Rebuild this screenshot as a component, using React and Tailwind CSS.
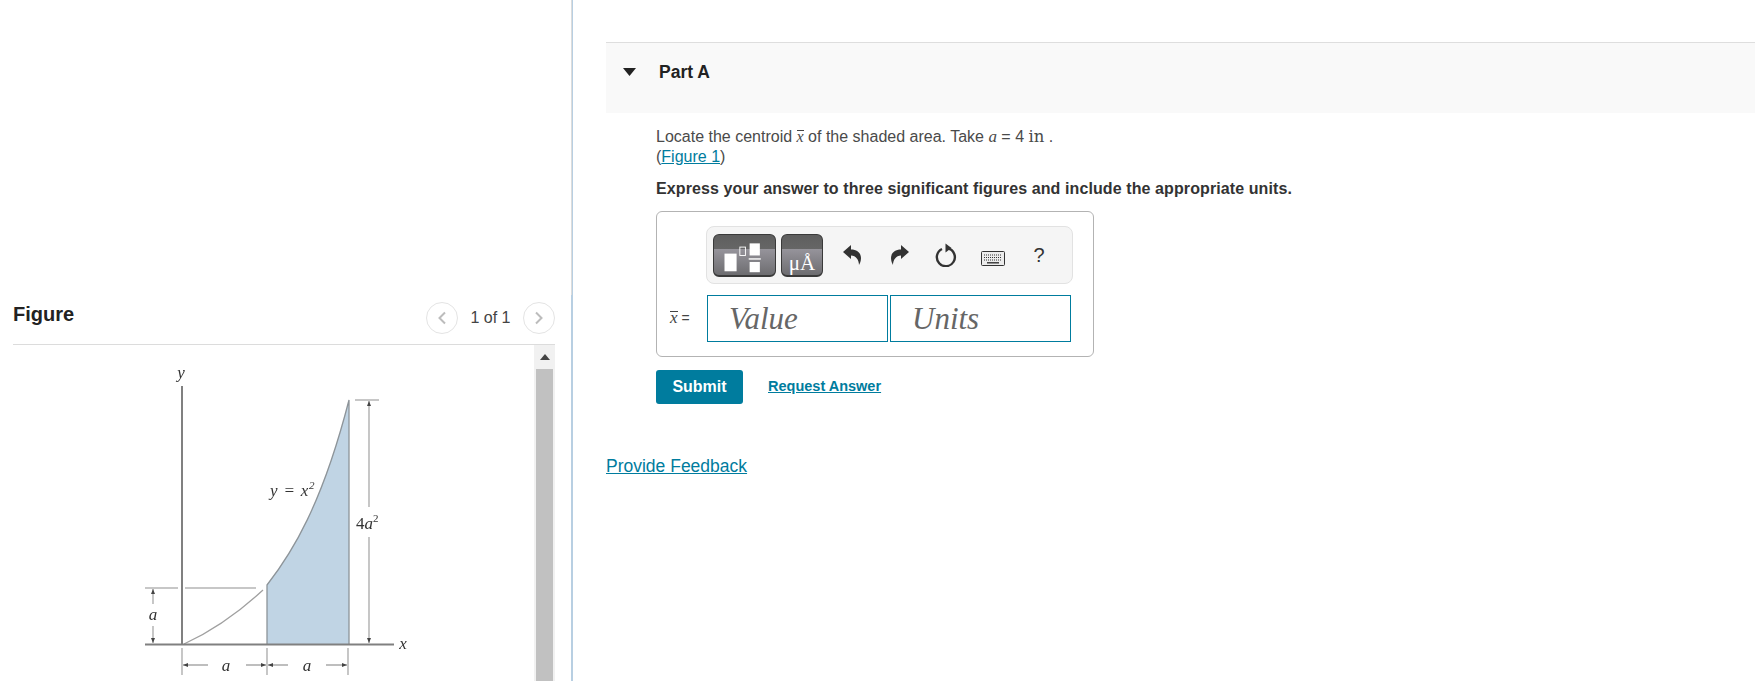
import React from "react";

function Figure() {
  const g = "#a9a9a9";
  return (
    <svg viewBox="13 345 521 336" className="block h-[336px] w-[521px] blur-[0.4px]">
      <path d="M267 585 C292 553 322 505 349 400 L349 644 L267 644 Z" fill="#c0d4e4" />
      <path d="M267 644 L267 585 C292 553 322 505 349 400 L349 644" fill="none" stroke="#8d9499" strokeWidth="1.3" />
      <path d="M184 644 Q225 625 263 590" fill="none" stroke="#a0a0a0" strokeWidth="1.3" />
      <path d="M182 386 V644" stroke="#808080" strokeWidth="2" />
      <path d="M145 644.5 H394" stroke="#808080" strokeWidth="2" />
      <path d="M145 588 H178 M185 588 H256" stroke="#b5b5b5" strokeWidth="1.5" />
      <path d="M355 400 H379" stroke="#b5b5b5" strokeWidth="1.5" />
      <path d="M369 401 V507 M369 537 V643" stroke={g} strokeWidth="1.3" />
      <path d="M153 589 V604 M153 626 V643" stroke={g} strokeWidth="1.3" />
      <path d="M182 648 V675 M267 648 V675 M348 648 V675" stroke={g} strokeWidth="1.3" />
      <path d="M183 665 H208 M246 665 H266 M268 665 H288 M326 665 H347" stroke={g} strokeWidth="1.3" />
      <path d="M369 401 l-2 5 h4 Z M369 643 l-2 -5 h4 Z M153 589 l-2 5 h4 Z M153 643 l-2 -5 h4 Z M183 665 l5 -2 v4 Z M266 665 l-5 -2 v4 Z M268 665 l5 -2 v4 Z M347 665 l-5 -2 v4 Z" fill="#444" />
      <g fontFamily="'Liberation Serif', serif" fontSize="17" fill="#333" fontStyle="italic">
        <text x="181" y="378" textAnchor="middle">y</text>
        <text x="403" y="649" textAnchor="middle">x</text>
        <text x="153" y="620" textAnchor="middle">a</text>
        <text x="226" y="671" textAnchor="middle">a</text>
        <text x="307" y="671" textAnchor="middle">a</text>
        <text x="270" y="496" letterSpacing="0.8">y = x<tspan fontSize="11" dy="-7">2</tspan></text>
        <text x="356" y="529"><tspan fontStyle="normal">4</tspan>a<tspan fontSize="11" dy="-7" fontStyle="normal">2</tspan></text>
      </g>
    </svg>
  );
}

function Templates() {
  return (
    <svg viewBox="0 0 63 43" className="absolute left-0 top-0 h-full w-full">
      <rect x="10" y="20" width="13" height="19" fill="#fff" />
      <rect x="26.5" y="13" width="6" height="9" fill="none" stroke="#fff" strokeWidth="1" />
      <rect x="37" y="9" width="11" height="13" fill="#fff" />
      <rect x="36" y="25" width="13" height="1.5" fill="#fff" />
      <rect x="37" y="29" width="11" height="11" fill="#fff" />
    </svg>
  );
}

function Undo({ flip }) {
  return (
    <svg viewBox="0 0 18 20" className={flip ? "h-[20px] w-[18px] -scale-x-100" : "h-[20px] w-[18px]"}>
      <path d="M0 7 L8 0 V4.5 C14 4.5 18 8 18 13 C18 16 17 18 16 20 C16 15 13 10.5 8 10.5 V14 Z" fill="#333" />
    </svg>
  );
}

function Reload() {
  return (
    <svg viewBox="0 0 24 24" className="h-[24px] w-[24px]">
      <path d="M14 5.4 A9 9 0 1 1 8 6" fill="none" stroke="#333" strokeWidth="2.4" />
      <path d="M11.5 0.5 L17.5 5 L11.5 9.5 Z" fill="#333" />
    </svg>
  );
}

function Keyboard() {
  return (
    <svg viewBox="0 0 24 15" className="h-[15px] w-[24px]">
      <rect x="0.5" y="0.5" width="23" height="14" rx="1" fill="#ececec" stroke="#333" />
      <path d="M3 4 H21 M3 6.5 H21 M3 9 H21" stroke="#333" strokeWidth="1.2" strokeDasharray="1 1" />
      <path d="M6 11.8 H18" stroke="#333" strokeWidth="1.4" />
    </svg>
  );
}

function XBar({ size }) {
  return (
    <span className={`inline-block border-t border-[#444] font-['Liberation_Serif',serif] italic leading-[11px] ${size}`}>x</span>
  );
}

export default function App() {
  return (
    <div className="flex h-[681px] w-full overflow-hidden bg-white font-['Liberation_Sans',Arial,sans-serif] text-[16px] text-[#4a4a4a]">
      <div className="flex w-[571px] shrink-0 flex-col pl-[13px] pr-[16px] pt-[295px]">
        <div className="flex h-[50px] shrink-0 items-start justify-between border-b border-[#dcdcdc]">
          <div className="mt-[8px] text-[20px] leading-[22px] font-bold text-[#222]">Figure</div>
          <div className="flex items-center pt-[7px]">
            <div className="flex h-[32px] w-[32px] items-center justify-center rounded-full border border-[#e4e4e4]">
              <svg viewBox="0 0 10 14" className="h-[14px] w-[10px]"><path d="M8 1.5 L2.5 7 L8 12.5" fill="none" stroke="#bcbcbc" strokeWidth="2" /></svg>
            </div>
            <span className="w-[65px] text-center text-[16px] text-[#444]">1 of 1</span>
            <div className="flex h-[32px] w-[32px] items-center justify-center rounded-full border border-[#e4e4e4]">
              <svg viewBox="0 0 10 14" className="h-[14px] w-[10px]"><path d="M2 1.5 L7.5 7 L2 12.5" fill="none" stroke="#bcbcbc" strokeWidth="2" /></svg>
            </div>
          </div>
        </div>
        <div className="flex min-h-0 flex-1">
          <div className="min-w-0 flex-1"><Figure /></div>
          <div className="flex w-[21px] shrink-0 flex-col items-center bg-[#f1f1f1]">
            <div className="flex h-[24px] shrink-0 items-center justify-center">
              <svg viewBox="0 0 10 6" className="h-[6px] w-[10px]"><path d="M0 6 L5 0 L10 6 Z" fill="#444" /></svg>
            </div>
            <div className="w-[17px] flex-1 bg-[#c1c1c1]" />
          </div>
        </div>
      </div>

      <div className="flex w-[2px] shrink-0 flex-col bg-[#b8cfe2]">
        <div className="h-[295px] w-px bg-[#dcdcdc]" />
      </div>

      <div className="min-w-0 flex-1 pl-[33px] pt-[42px]">
        <div className="flex h-[71px] items-start border-t border-[#dedede] bg-[#f9f9f9] pl-[17px]">
          <svg viewBox="0 0 13 8" className="mt-[25px] h-[8px] w-[13px]"><path d="M0 0 H13 L6.5 8 Z" fill="#222" /></svg>
          <div className="ml-[23px] mt-[19px] text-[17.5px] leading-[20px] font-bold text-[#222]">Part A</div>
        </div>

        <div className="pl-[50px]">
          <div className="mt-[14px] leading-[20px]">
            Locate the centroid{" "}
            <XBar size="text-[16px]" />{" "}
            of the shaded area. Take{" "}
            <span className="font-['Liberation_Serif',serif] text-[17px] italic">a</span> = 4{" "}
            <span className="font-['DejaVu_Serif',serif] text-[16.5px]">in</span> .
            <br />
            (<a className="text-[#007c9e] underline">Figure 1</a>)
          </div>
          <div className="mt-[12px] text-[16px] leading-[20px] font-bold tracking-[0.1px] text-[#333]">
            Express your answer to three significant figures and include the appropriate units.
          </div>

          <div className="mt-[12px] w-[438px] rounded-[6px] border border-[#b3b3b3] pb-[14px] pl-[13px] pt-[14px]">
            <div className="ml-[36px] flex h-[58px] w-[367px] items-center rounded-[8px] border border-[#e2e2e2] bg-[#f5f5f5] pl-[6px]">
              <div className="relative h-[43px] w-[63px] rounded-[6px] border border-b-2 border-[#3a3a3a] bg-[linear-gradient(#5e5e5e_0%,#666666_34%,#96949b_35%,#6d6d70_100%)]">
                <Templates />
              </div>
              <div className="ml-[5px] flex h-[43px] w-[42px] items-end justify-center rounded-[6px] border border-b-2 border-[#3a3a3a] bg-[linear-gradient(#5e5e5e_0%,#666666_34%,#96949b_35%,#6d6d70_100%)] font-['Liberation_Serif',serif] text-[21px] leading-[24px] text-white">
                μÅ
              </div>
              <div className="ml-[5px] flex w-[48px] justify-center"><Undo /></div>
              <div className="flex w-[48px] justify-center"><Undo flip /></div>
              <div className="flex w-[44px] justify-center"><Reload /></div>
              <div className="flex w-[50px] justify-center pt-[6px]"><Keyboard /></div>
              <div className="w-[42px] text-center text-[20px] text-[#333]">?</div>
            </div>

            <div className="mt-[11px] flex items-center">
              <div className="w-[37px] whitespace-nowrap text-[14px] text-[#444]">
                <XBar size="text-[17px]" /> =
              </div>
              <input
                placeholder="Value"
                className="h-[47px] w-[181px] border border-[#007c9e] pl-[21px] font-['Liberation_Serif',serif] text-[31px] italic outline-none placeholder:text-[#666666]"
              />
              <input
                placeholder="Units"
                className="ml-[2px] h-[47px] w-[181px] border border-[#007c9e] pl-[21px] font-['Liberation_Serif',serif] text-[31px] italic outline-none placeholder:text-[#666666]"
              />
            </div>
          </div>

          <div className="mt-[13px] flex items-center">
            <button className="h-[34px] w-[87px] rounded-[3px] bg-[#007c9e] text-[16px] font-bold text-white">Submit</button>
            <a className="ml-[25px] text-[14.5px] font-bold text-[#007c9e] underline">Request Answer</a>
          </div>
        </div>

        <a className="mt-[50px] block text-[17.5px] leading-[24px] text-[#007c9e] underline">Provide Feedback</a>
      </div>
    </div>
  );
}
